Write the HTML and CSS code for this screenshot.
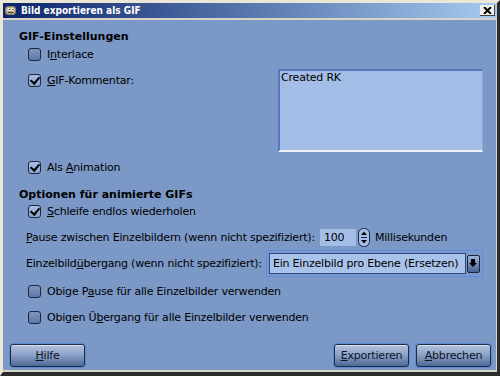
FILE: index.html
```html
<!DOCTYPE html>
<html lang="de">
<head>
  <meta charset="UTF-8">
  <meta name="viewport" content="width=device-width, initial-scale=1.0">
  <title>Bild exportieren als GIF</title>
  <link rel="stylesheet" href="styles.css">
</head>
<body>

  <div class="window">
    <!-- Titelleiste -->
    <div class="titlebar">
      <svg class="app-icon" width="13" height="11" viewBox="0 0 13 11">
        <path d="M1 3 L3 1 L10 1 L12 3 L12 8 L10 10 L3 10 L1 8 Z" fill="#8a8270"/>
        <path d="M2 3 L4 2 L9 2 L11 3 L11 7 L9 9 L4 9 L2 7 Z" fill="#b7ab8c"/>
        <circle cx="5" cy="4.5" r="1.6" fill="#fff"/>
        <circle cx="8.5" cy="4.5" r="1.6" fill="#fff"/>
        <circle cx="5.3" cy="4.6" r="0.7" fill="#000"/>
        <circle cx="8.8" cy="4.6" r="0.7" fill="#000"/>
        <path d="M4 7.5 L9 7.5" stroke="#4a3a20" stroke-width="1"/>
      </svg>
      <span class="title">Bild exportieren als GIF</span>
      <span class="close">
        <svg width="9" height="7" viewBox="0 0 9 7">
          <path d="M1 0 L8 7 M8 0 L1 7" stroke="#000" stroke-width="2"/>
        </svg>
      </span>
    </div>

    <div class="content">
      <div class="group-title">GIF-Einstellungen</div>

      <label class="check-row">
        <span class="checkbox"></span>
        <span>I<u>n</u>terlace</span>
      </label>

      <div class="comment-row">
        <label class="check-row tall">
          <span class="checkbox checked"></span>
          <span><u>G</u>IF-Kommentar:</span>
        </label>
        <div class="comment-box">Created RK</div>
      </div>

      <label class="check-row anim">
        <span class="checkbox checked"></span>
        <span>Als <u>A</u>nimation</span>
      </label>

      <div class="group-title second">Optionen für animierte GIFs</div>

      <label class="check-row loop">
        <span class="checkbox checked"></span>
        <span><u>S</u>chleife endlos wiederholen</span>
      </label>

      <div class="field-row delay">
        <span><u>P</u>ause zwischen Einzelbildern (wenn nicht spezifiziert):</span>
        <span class="spin">
          <span class="spin-entry">100</span>
          <span class="spin-btn">
            <svg width="12" height="19" viewBox="0 0 12 19">
              <rect x="0.5" y="0.5" width="11" height="18" rx="5" fill="#a7bee4" stroke="#1a2640"/>
              <path d="M3 7 L6 3.5 L9 7 Z" fill="#000"/>
              <path d="M3 12 L6 15.5 L9 12 Z" fill="#000"/>
              <path d="M3 9.5 L9 9.5" stroke="#1a2640"/>
            </svg>
          </span>
        </span>
        <span>Millisekunden</span>
      </div>

      <div class="field-row dispose">
        <span>Einzelbild<u>ü</u>bergang (wenn nicht spezifiziert):</span>
        <div class="combo">
          <span class="combo-text">Ein Einzelbild pro Ebene (Ersetzen)</span>
          <span class="combo-btn">
            <svg width="10" height="15" viewBox="0 0 10 15">
              <path d="M3 3 L7 3 L7 7 L9 7 L5 11 L1 7 L3 7 Z" fill="#000"/>
            </svg>
          </span>
        </div>
      </div>

      <label class="check-row same-delay">
        <span class="checkbox"></span>
        <span>Obige P<u>a</u>use für alle Einzelbilder verwenden</span>
      </label>

      <label class="check-row same-dispose">
        <span class="checkbox"></span>
        <span>Obigen Ü<u>b</u>ergang für alle Einzelbilder verwenden</span>
      </label>

      <div class="actions">
        <button class="btn"><u>H</u>ilfe</button>
        <span class="spacer"></span>
        <button class="btn"><u>E</u>xportieren</button>
        <button class="btn"><u>A</u>bbrechen</button>
      </div>
    </div>
  </div>

</body>
</html>
```

FILE: styles.css
```css
* {
  margin: 0;
  padding: 0;
  box-sizing: border-box;
}

body {
  width: 500px;
  height: 376px;
  overflow: hidden;
  font-family: 'DejaVu Sans', sans-serif;
  font-size: 11px;
  letter-spacing: -0.2px;
  color: #000;
}

u {
  text-decoration: underline;
  text-underline-offset: 1px;
}

.window {
  width: 500px;
  height: 376px;
  display: flex;
  flex-direction: column;
  background-color: #7b98c6;
  border-top: 3px solid #ebe6d6;
  border-left: 3px solid #ebe6d6;
  border-right: 3px solid #2b2b2b;
  border-bottom: 4px solid #2b2b2b;
}

/* Titelleiste */
.titlebar {
  display: flex;
  align-items: center;
  background: linear-gradient(90deg, #0a246a, #a6caf0);
  border-bottom: 2px solid #d8d4c6;
  height: 17px;
  padding-left: 1px;
}

.app-icon {
  margin-right: 4px;
}

.title {
  font-family: 'DejaVu Sans Condensed', 'DejaVu Sans', sans-serif;
  font-stretch: condensed;
  font-weight: bold;
  font-size: 10px;
  letter-spacing: 0;
  color: #fff;
  flex: 1;
}

.close {
  width: 15px;
  height: 11px;
  margin-right: 2px;
  background-color: #f2f0ea;
  border-right: 1px solid #404040;
  border-bottom: 1px solid #404040;
  display: flex;
  align-items: center;
  justify-content: center;
}

/* Inhalt */
.content {
  flex: 1;
  display: flex;
  flex-direction: column;
  padding: 9px 13px 3px 16px;
  border-right: 1px solid #d8d4c6;
  border-bottom: 2px solid #d8d4c6;
}

.group-title {
  font-weight: bold;
  font-size: 11px;
  letter-spacing: 0;
  line-height: 15px;
  height: 15px;
}

.group-title.second {
  margin-top: 10px;
}

.check-row {
  display: flex;
  align-items: center;
  height: 20px;
  padding-left: 9px;
}

.checkbox {
  width: 13px;
  height: 13px;
  margin-right: 6px;
  border: 1px solid #1c2742;
  border-radius: 3px;
  background: linear-gradient(180deg, #8196bd, #5f78a6);
  position: relative;
}

.checkbox.checked {
  background: linear-gradient(180deg, #a9bde0, #8aa3cf);
}

.checkbox.checked::after {
  content: '';
  position: absolute;
  left: 3px;
  top: 0px;
  width: 4px;
  height: 7px;
  border-right: 2px solid #000;
  border-bottom: 2px solid #000;
  transform: rotate(40deg);
}

.comment-row {
  display: grid;
  grid-template-columns: 1fr 205px;
  margin-top: 5px;
  height: 83px;
}

.check-row.tall {
  height: 22px;
}

.comment-box {
  background-color: #a3bde6;
  border-top: 2px solid #5577bb;
  border-left: 2px solid #5577bb;
  border-bottom: 2px solid #eef3fb;
  border-right: 1px solid #8fa9d6;
  padding: 0 1px;
  line-height: 14px;
}

.check-row.anim {
  margin-top: 5px;
}

.check-row.loop {
  height: 18px;
}

.field-row {
  display: flex;
  align-items: center;
  padding-left: 7px;
  white-space: nowrap;
}

.field-row.delay {
  margin-top: 8px;
  height: 18px;
}

.spin {
  display: flex;
  align-items: center;
  margin: 0 5px 0 5px;
}

.spin-entry {
  width: 36px;
  height: 17px;
  line-height: 17px;
  padding-left: 4px;
  background-color: #a3bde6;
}

.spin-btn {
  display: flex;
  margin-left: 2px;
}

.field-row.dispose {
  margin-top: 4px;
  height: 27px;
}

.combo {
  margin-left: 4px;
  width: 217px;
  height: 27px;
  display: flex;
  align-items: center;
  border: 1px solid #5b8fe6;
  padding: 2px;
  background-color: #7b98c6;
}

.combo-text {
  flex: 1;
  height: 100%;
  display: flex;
  align-items: center;
  padding-left: 3px;
  background-color: #a9c2ea;
  border: 1px solid #2d4680;
}

.combo-btn {
  width: 13px;
  height: 18px;
  margin-left: 1px;
  display: flex;
  align-items: center;
  justify-content: center;
  background: linear-gradient(180deg, #9db3d8, #4a6290);
  border: 1px solid #1a2640;
  border-radius: 2px;
}

.check-row.same-delay {
  margin-top: 4px;
}

.check-row.same-dispose {
  margin-top: 6px;
}

/* Schaltflächen */
.actions {
  margin-top: auto;
  display: flex;
  gap: 7px;
  margin-left: -9px;
  margin-right: -8px;
}

.spacer {
  flex: 1;
}

.btn {
  width: 75px;
  height: 23px;
  font-family: 'DejaVu Sans', sans-serif;
  font-size: 11px;
  letter-spacing: -0.2px;
  color: #0d1526;
  border: 1px solid #1d2b48;
  border-radius: 3px;
  background: linear-gradient(180deg, #b3c3de 0%, #8ea3c8 45%, #4e6895 100%);
  box-shadow: 0 0 0 1px #5d8ad4, inset 0 1px 0 #d6e0f0;
}
```
